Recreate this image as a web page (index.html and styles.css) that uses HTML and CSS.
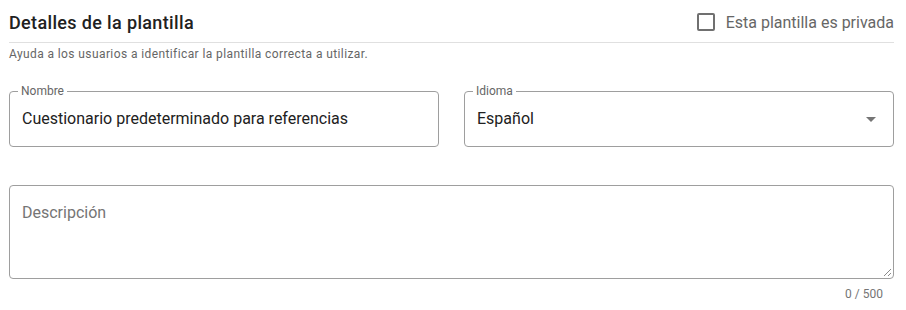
FILE: index.html
```html
<!DOCTYPE html>
<html lang="es">
<head>
    <meta charset="UTF-8">
    <meta name="viewport" content="width=device-width, initial-scale=1.0">
    <title>Detalles de la plantilla</title>
    <link rel="stylesheet" href="styles.css">
</head>
<body>
    <div class="panel">
        <div class="header">
            <h2 class="title">Detalles de la plantilla</h2>
            <label class="check">
                <span class="box"></span>
                Esta plantilla es privada
            </label>
        </div>
        <p class="hint">Ayuda a los usuarios a identificar la plantilla correcta a utilizar.</p>

        <div class="row">
            <fieldset class="field">
                <legend>Nombre</legend>
                <div class="value">Cuestionario predeterminado para referencias</div>
            </fieldset>
            <fieldset class="field">
                <legend>Idioma</legend>
                <div class="value">Español</div>
                <span class="arrow"></span>
            </fieldset>
        </div>

        <div class="area">
            <div class="placeholder">Descripción</div>
            <svg class="grip" width="10" height="10" viewBox="0 0 10 10">
                <path d="M9 2 L2 9 M9 6 L6 9" stroke="#8a8a8a" stroke-width="1" fill="none"/>
            </svg>
        </div>
        <div class="counter">0 / 500</div>
    </div>
</body>
</html>
```

FILE: styles.css
```css
* {
    box-sizing: border-box;
}

body {
    margin: 0;
    font-family: Roboto, "Liberation Sans", sans-serif;
    background: #fff;
    color: #212121;
}

.panel {
    padding: 0 12px 0 9px;
}

.header {
    display: flex;
    justify-content: space-between;
    align-items: center;
    height: 43px;
    padding-top: 2px;
    border-bottom: 1px solid #e0e0e0;
}

.title {
    margin: 0;
    font-size: 18px;
    font-weight: 500;
    letter-spacing: 0.35px;
    color: #212121;
}

.check {
    display: flex;
    align-items: center;
    gap: 11px;
    font-size: 16px;
    color: #666;
}

.box {
    width: 18px;
    height: 18px;
    border: 2px solid #707070;
    border-radius: 2px;
}

.hint {
    margin: 4px 0 0;
    font-size: 12px;
    color: #666;
    letter-spacing: 0.4px;
}

.row {
    display: flex;
    gap: 25px;
    margin-top: 24px;
}

.field {
    position: relative;
    flex: 1;
    margin: 0;
    height: 62px;
    padding: 0 12px;
    border: 1px solid #9e9e9e;
    border-radius: 4px;
}

.field legend {
    padding: 0 3px;
    margin-left: -4px;
    font-size: 12px;
    line-height: 12px;
    color: #666;
}

.value {
    margin-top: 12px;
    font-size: 16px;
    line-height: 20px;
    color: #212121;
}

.arrow {
    position: absolute;
    right: 17px;
    top: 20px;
    border-left: 5px solid transparent;
    border-right: 5px solid transparent;
    border-top: 5px solid #757575;
}

.area {
    position: relative;
    margin-top: 38px;
    height: 94px;
    padding: 16px 12px;
    border: 1px solid #9e9e9e;
    border-radius: 4px;
}

.placeholder {
    font-size: 16px;
    line-height: 22px;
    color: #757575;
}

.grip {
    position: absolute;
    right: 1px;
    bottom: 1px;
}

.counter {
    margin-top: 8px;
    padding-right: 11px;
    text-align: right;
    font-size: 12px;
    color: #757575;
}
```
